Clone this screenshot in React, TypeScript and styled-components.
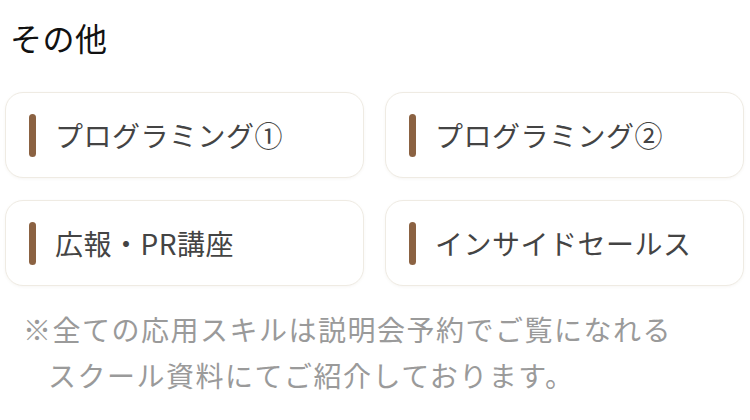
import styled, { createGlobalStyle } from "styled-components";

const GlobalStyle = createGlobalStyle`
  body {
    margin: 0;
    background: #ffffff;
    font-family: "Noto Sans CJK JP", "Noto Sans", sans-serif;
  }
`;

const items = ["プログラミング①", "プログラミング②", "広報・PR講座", "インサイドセールス"];

export default function App() {
  return (
    <>
      <GlobalStyle />
      <Section>
        <Title>その他</Title>
        <CardGrid>
          {items.map((label) => (
            <Card key={label}>
              <Accent />
              <CardLabel>{label}</CardLabel>
            </Card>
          ))}
        </CardGrid>
        <Note>
          ※全ての応用スキルは説明会予約でご覧になれる
          <br />
          スクール資料にてご紹介しております。
        </Note>
      </Section>
    </>
  );
}

const Section = styled.section`
  width: 750px;
  height: 420px;
  box-sizing: border-box;
  padding: 15px 6px 0 5px;
  display: flex;
  flex-direction: column;
`;

const Title = styled.h2`
  margin: 0 0 0 5px;
  font-size: 32px;
  font-weight: 400;
  letter-spacing: 0.5px;
  line-height: 44px;
  color: #111111;
`;

const CardGrid = styled.div`
  display: grid;
  grid-template-columns: 1fr 1fr;
  column-gap: 21px;
  row-gap: 22px;
  margin-top: 33px;
`;

const Card = styled.div`
  height: 86px;
  box-sizing: border-box;
  display: flex;
  align-items: center;
  gap: 19px;
  padding-left: 23px;
  border: 1px solid #efebe3;
  border-radius: 18px;
  background: #ffffff;
  box-shadow: 0 1px 3px rgba(120, 100, 70, 0.06);
`;

const Accent = styled.span`
  width: 7px;
  height: 43px;
  border-radius: 4px;
  background: #8b6242;
  flex-shrink: 0;
`;

const CardLabel = styled.span`
  font-size: 28px;
  letter-spacing: 0.5px;
  color: #444444;
  line-height: 1;
`;

const Note = styled.p`
  margin: 20px 0 0 0;
  padding-left: 43px;
  text-indent: -25px;
  font-size: 28px;
  letter-spacing: 1.5px;
  line-height: 46px;
  color: #9a9a9a;
`;
